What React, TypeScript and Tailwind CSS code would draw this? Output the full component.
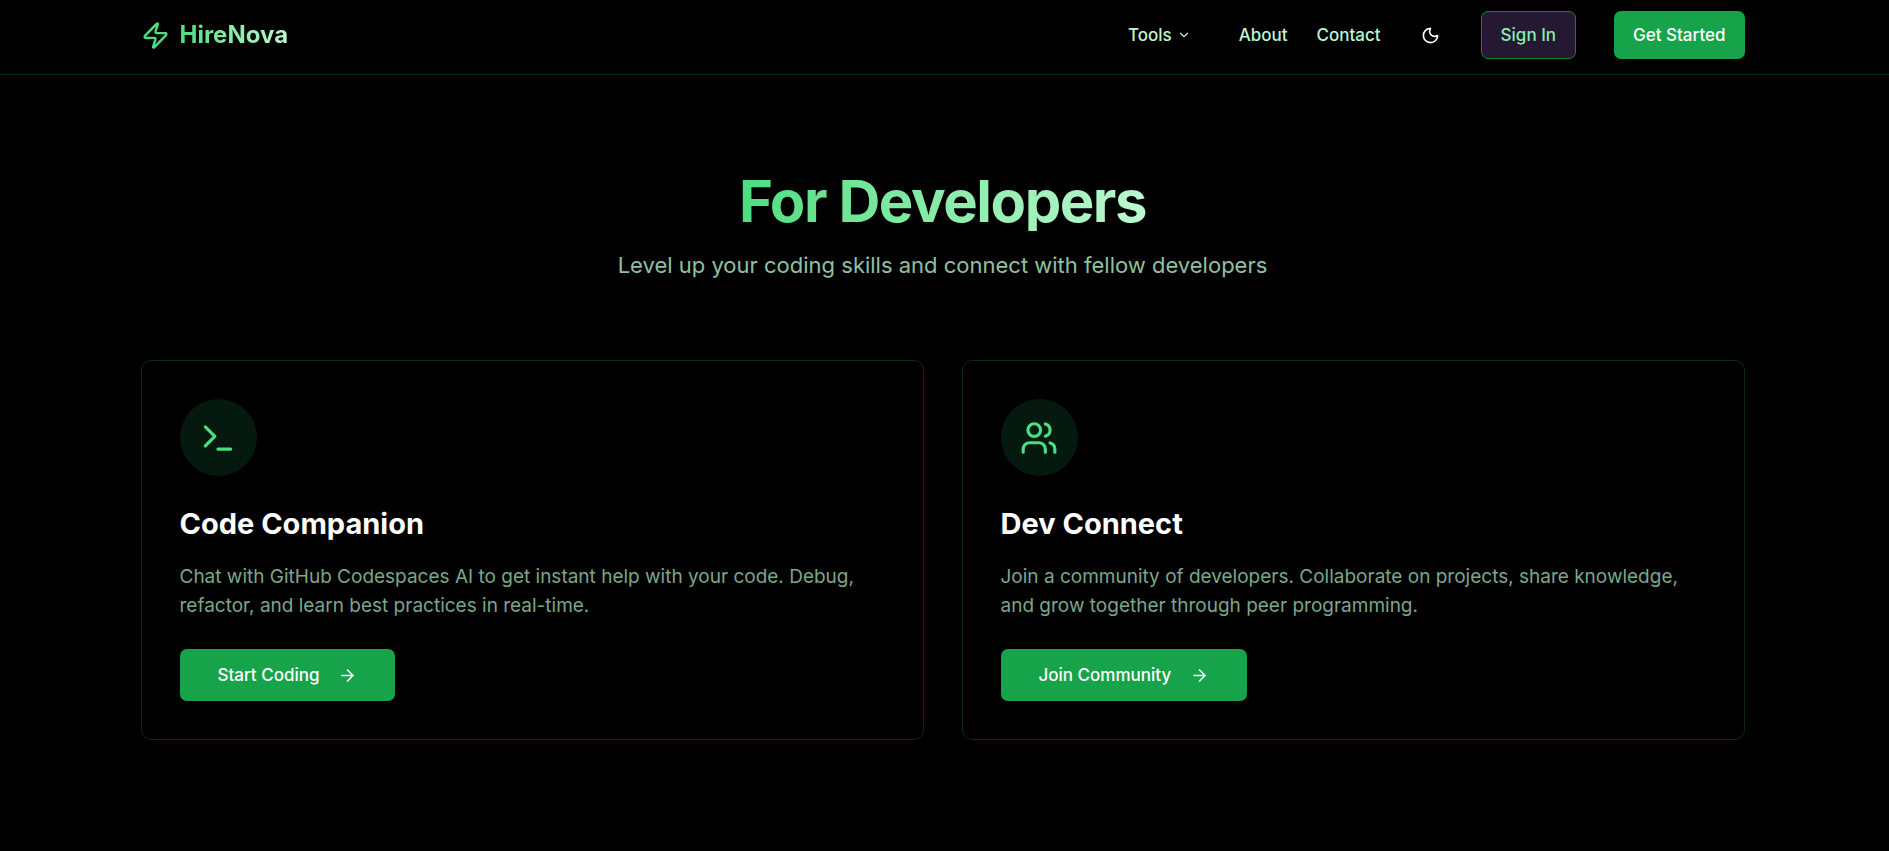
import React from "react";
import { ArrowRight, ChevronDown, Moon, Terminal, Users, Zap } from "lucide-react";

const features = [
  {
    title: "Code Companion",
    description:
      "Chat with GitHub Codespaces AI to get instant help with your code. Debug, refactor, and learn best practices in real-time.",
    action: "Start Coding",
    href: "#code-companion",
    icon: Terminal,
  },
  {
    title: "Dev Connect",
    description:
      "Join a community of developers. Collaborate on projects, share knowledge, and grow together through peer programming.",
    action: "Join Community",
    href: "#dev-connect",
    icon: Users,
  },
];

const Header: React.FC = () => {
  return (
    <header className="border-b border-[#0a2916] bg-black">
      <div className="mx-auto flex max-w-[1680px] items-center justify-between pt-[11px] pr-10 pb-[15px] pl-9">
        {/* Logo */}
        <a href="#home" className="flex items-center gap-[10px]">
          <Zap className="h-[29px] w-[29px] text-[#4ade80]" />
          <span className="bg-gradient-to-r from-[#4ade80] to-[#bbf7d0] bg-clip-text text-2xl leading-[34px] font-bold text-transparent">
            HireNova
          </span>
        </a>

        <nav className="flex items-center text-[17px] leading-[24px] font-medium text-[#bbf7d0]">
          <button type="button" className="mr-[48px] flex items-center gap-[5px]">
            Tools
            <ChevronDown className="h-[14px] w-[14px]" />
          </button>
          <a href="#about" className="mr-[29px]">
            About
          </a>
          <a href="#contact" className="mr-[26px]">
            Contact
          </a>
          <button
            type="button"
            aria-label="Toggle theme"
            className="mr-[26px] flex h-12 w-12 items-center justify-center text-white"
          >
            <Moon className="h-[19px] w-[19px]" />
          </button>
          <a
            href="#sign-in"
            className="mr-[38px] flex h-12 items-center rounded-[7px] border border-[#15803d] bg-[#251833] px-[19px] text-[#86efac]"
          >
            Sign In
          </a>
          <a href="#get-started" className="flex h-12 items-center rounded-[7px] bg-[#16a34a] px-[19px] text-white">
            Get Started
          </a>
        </nav>
      </div>
    </header>
  );
};

export default function App() {
  return (
    <div className="min-h-screen bg-black font-['Inter',sans-serif] text-white">
      <Header />

      <main className="mx-auto max-w-[1680px] pt-[96px] pr-10 pb-[96px] pl-9">
        {/* Section heading */}
        <div className="mb-[78px] flex flex-col items-center text-center">
          <h1 className="bg-gradient-to-r from-[#4ade80] to-[#bbf7d0] bg-clip-text text-[58px] leading-[60px] font-bold tracking-tight text-transparent">
            For Developers
          </h1>
          <p className="mt-[18px] text-[22px] leading-[33px] text-[#8fc0a1]">
            Level up your coding skills and connect with fellow developers
          </p>
        </div>

        <div className="grid grid-cols-1 gap-[38px] md:grid-cols-2">
          {features.map((feature) => {
            const Icon = feature.icon;
            return (
              <section key={feature.title} className="rounded-[10px] border border-[#0a2916] p-[38px]">
                <div className="mb-[29px] flex h-[77px] w-[77px] items-center justify-center rounded-full bg-[#06190e]">
                  <Icon className="h-[38px] w-[38px] text-[#4ade80]" />
                </div>
                <h2 className="mb-[19px] text-[29px] leading-[38px] font-bold">{feature.title}</h2>
                <p className="mb-[29px] text-[19px] leading-[29px] text-[#7ca68a]">{feature.description}</p>
                <a
                  href={feature.href}
                  className="inline-flex h-[52px] items-center gap-[19px] rounded-[7px] bg-[#16a34a] px-[38px] text-[17px] leading-[24px] font-medium"
                >
                  {feature.action}
                  <ArrowRight className="h-[19px] w-[19px]" />
                </a>
              </section>
            );
          })}
        </div>
      </main>
    </div>
  );
}
